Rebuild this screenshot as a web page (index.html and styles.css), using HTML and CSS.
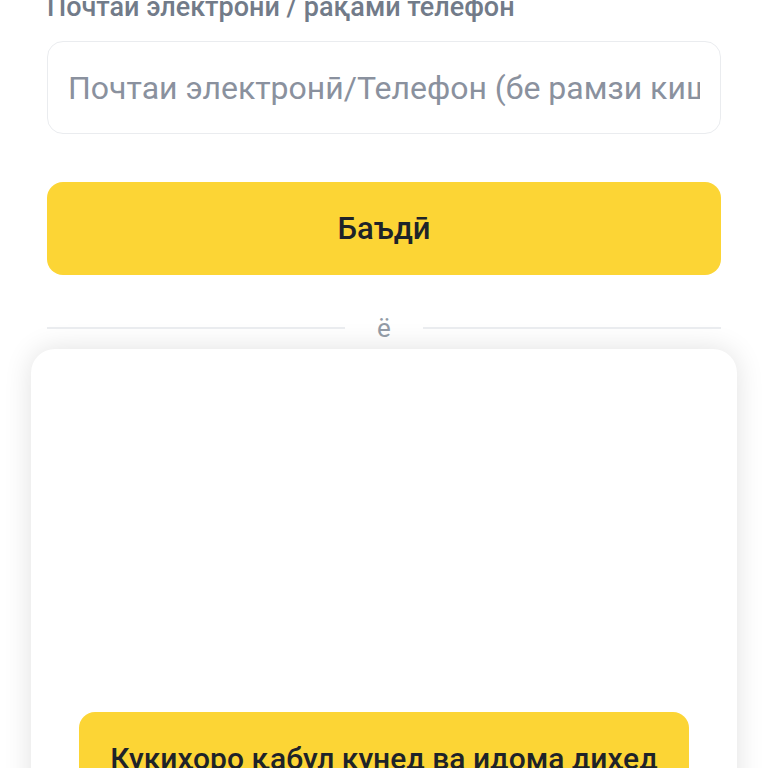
FILE: index.html
```html
<!DOCTYPE html>
<html lang="tg">
<head>
    <meta charset="UTF-8">
    <meta name="viewport" content="width=device-width, initial-scale=1.0">
    <title>Воридшавӣ</title>
    <link rel="stylesheet" href="styles.css">
</head>
<body>
    <div class="page">
        <label class="field-label" for="account">Почтаи электрони / рақами телефон</label>
        <input type="text" id="account" class="field-input" placeholder="Почтаи электронӣ/Телефон (бе рамзи кишвар)">
        <button class="btn-primary">Баъдӣ</button>
        <div class="divider">
            <span class="divider-line"></span>
            <span class="divider-text">ё</span>
            <span class="divider-line"></span>
        </div>
        <div class="cookie-sheet">
            <div class="cookie-body"></div>
            <button class="btn-primary btn-cookie">Кукиҳоро қабул кунед ва идома диҳед</button>
        </div>
    </div>
</body>
</html>
```

FILE: styles.css
```css
body {
    margin: 0;
    background-color: #ffffff;
    font-family: Roboto, "Noto Sans", Arial, sans-serif;
    color: #1e2329;
    overflow: hidden;
}
.page {
    padding: 0 47px;
}
.field-label {
    display: block;
    margin-top: -9px;
    margin-bottom: 18px;
    font-size: 27px;
    line-height: 32px;
    font-weight: 500;
    color: #727b89;
}
.field-input {
    display: block;
    box-sizing: border-box;
    width: 100%;
    height: 93px;
    padding: 0 20px;
    border: 1px solid #eaecef;
    border-radius: 16px;
    font-family: inherit;
    font-size: 32px;
    color: #1e2329;
    background: #ffffff;
    outline: none;
}
.field-input::placeholder {
    color: #8a919e;
}
.btn-primary {
    display: block;
    width: 100%;
    height: 93px;
    margin-top: 48px;
    border: none;
    border-radius: 16px;
    background-color: #fcd535;
    color: #1e2329;
    font-family: inherit;
    font-size: 31px;
    font-weight: 500;
}
.divider {
    display: flex;
    align-items: center;
    gap: 32px;
    margin-top: 38px;
    height: 30px;
}
.divider-line {
    flex: 1;
    height: 2px;
    background-color: #eaecef;
}
.divider-text {
    font-size: 26px;
    color: #929aa5;
}
.cookie-sheet {
    margin: 6px -16px 0;
    padding: 0 48px;
    height: 500px;
    border-radius: 24px;
    background-color: #ffffff;
    box-shadow: 0 0 28px rgba(0, 0, 0, 0.12);
}
.cookie-body {
    height: 363px;
}
.btn-cookie {
    margin-top: 0;
    font-size: 30px;
}
```
